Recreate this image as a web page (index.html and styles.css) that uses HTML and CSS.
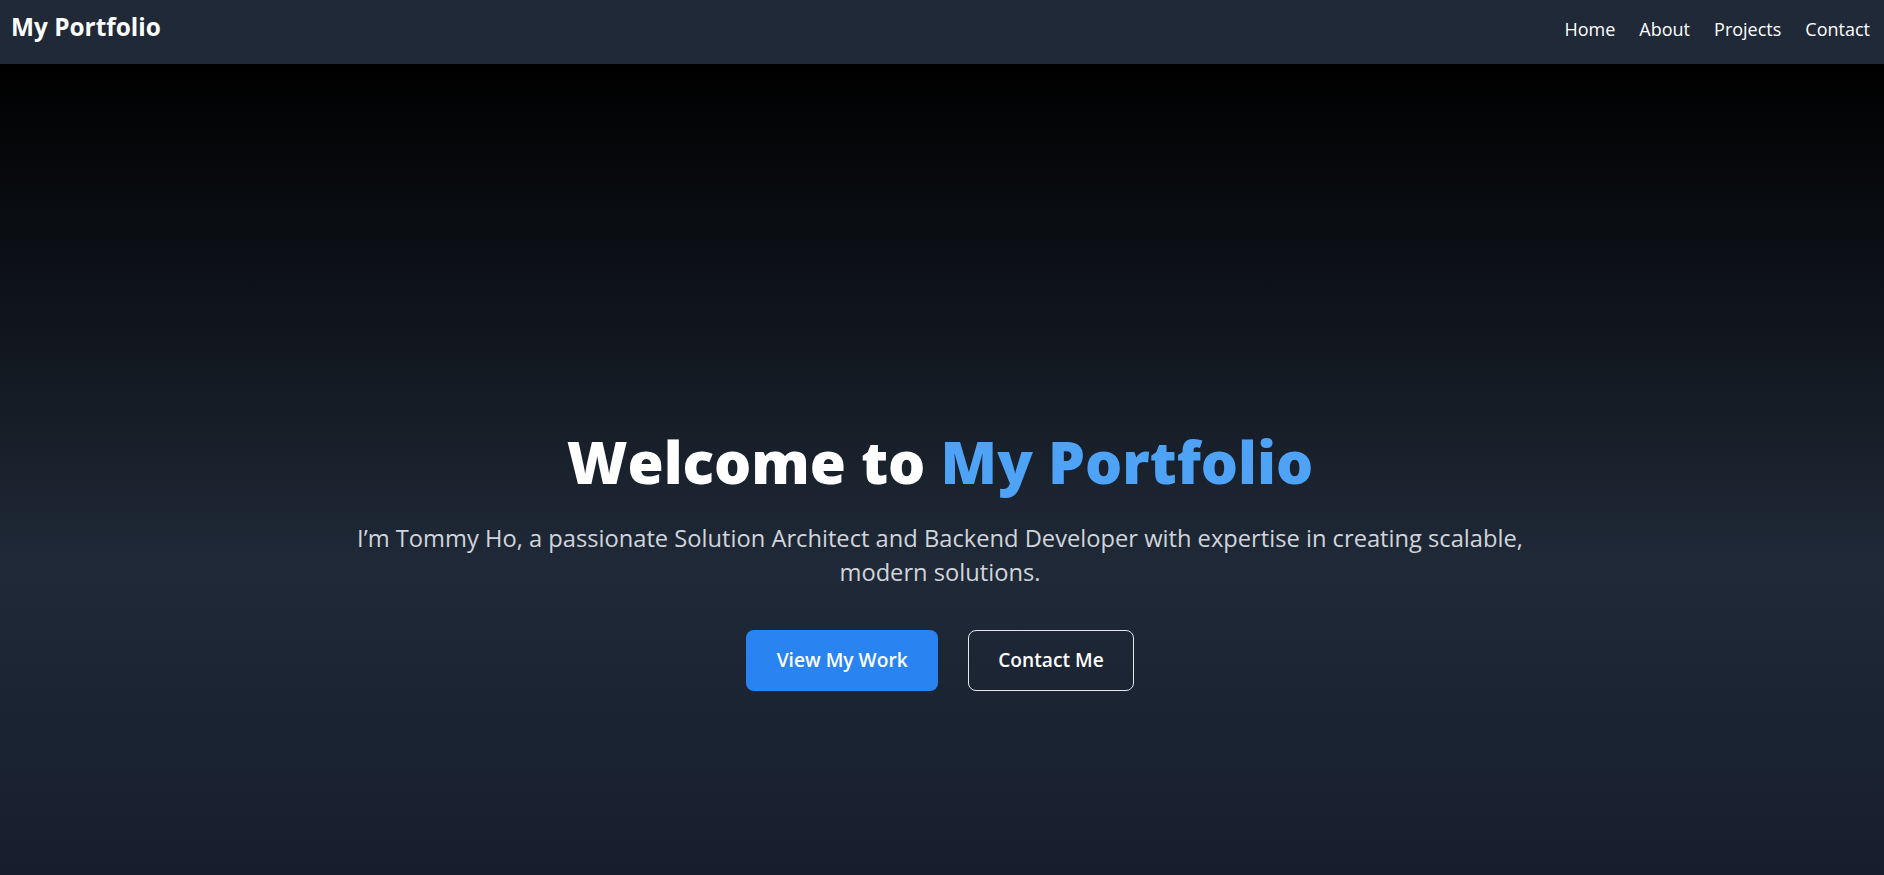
FILE: index.html
```html
<!DOCTYPE html>
<html lang="en">
<head>
<meta charset="utf-8">
<title>My Portfolio</title>
<link rel="stylesheet" href="styles.css">
</head>
<body>
<header class="site-header">
  <a class="logo" href="#">My Portfolio</a>
  <nav class="nav">
    <a href="#">Home</a>
    <a href="#">About</a>
    <a href="#">Projects</a>
    <a href="#">Contact</a>
  </nav>
</header>
<main>
  <section class="hero">
    <div class="hero-inner">
      <h1 class="hero-title">Welcome to <span class="accent">My Portfolio</span></h1>
      <p class="hero-text">I’m Tommy Ho, a passionate Solution Architect and Backend Developer with expertise in creating scalable, modern solutions.</p>
      <div class="hero-actions">
        <a class="btn btn-primary" href="#">View My Work</a>
        <a class="btn btn-outline" href="#">Contact Me</a>
      </div>
    </div>
  </section>
</main>
</body>
</html>
```
FILE: styles.css
```css
* { box-sizing: border-box; }
html, body { margin: 0; padding: 0; }
body {
  font-family: "Open Sans", "Noto Sans", sans-serif;
  background: #111827;
  color: #fff;
}
a { color: inherit; text-decoration: none; }

.site-header {
  height: 64px;
  background: #1f2937;
  display: flex;
  align-items: baseline;
  justify-content: space-between;
  padding: 11px 14px 0 11px;
}
.logo {
  font-size: 24.4px;
  line-height: 32px;
  font-weight: 700;
  color: #fff;
}
.nav {
  display: flex;
  gap: 24px;
  font-size: 18px;
  line-height: 28px;
}
.nav a { color: #fff; }

.hero {
  min-height: 995px;
  background: linear-gradient(to bottom, #000000 0%, #1f2937 50%, #111827 100%);
  display: flex;
  align-items: center;
  justify-content: center;
  padding: 0 4px 0 0;
  text-align: center;
}
.hero-inner {
  display: flex;
  flex-direction: column;
  align-items: center;
}
.hero-title {
  margin: 0 0 30px;
  font-size: 58.5px;
  line-height: 58.5px;
  font-weight: 800;
  color: #fff;
}
.accent { color: #4fa3f7; }
.hero-text {
  margin: 0 0 41px;
  max-width: 1200px;
  font-size: 23.7px;
  line-height: 34px;
  color: #d1d5db;
}
.hero-actions {
  display: flex;
  gap: 30px;
}
.btn {
  display: inline-block;
  font-size: 19.2px;
  line-height: 28px;
  font-weight: 600;
  border-radius: 8px;
  color: #fff;
}
.btn-primary {
  background: #2984f1;
  padding: 16.5px 30.5px;
}
.btn-outline {
  border: 1px solid #e5e7eb;
  padding: 15.5px 29px;
}
```
